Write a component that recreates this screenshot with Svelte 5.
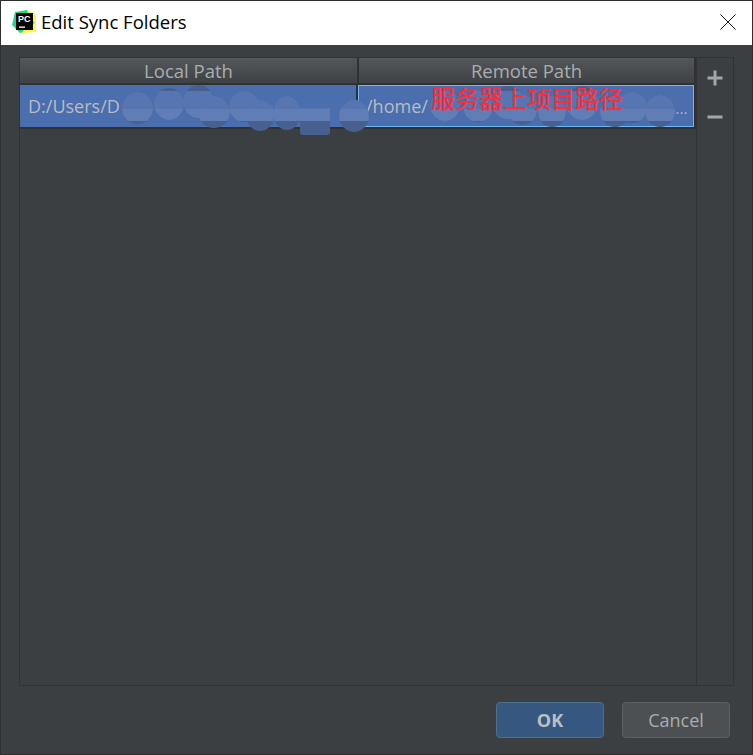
<script>
    // redaction blobs, in page coordinates
    let blobs = [
        { x: 122, y: 92, w: 31, h: 32 },
        { x: 154, y: 88, w: 30, h: 32 },
        { x: 183, y: 85, w: 31, h: 33 },
        { x: 198, y: 96, w: 32, h: 32 },
        { x: 229, y: 91, w: 31, h: 31 },
        { x: 246, y: 100, w: 28, h: 31 },
        { x: 255, y: 105, w: 18, h: 20, r: "0" },
        { x: 273, y: 96, w: 28, h: 34 },
        { x: 300, y: 108, w: 30, h: 27, r: "0 0 3px 3px" },
        { x: 339, y: 100, w: 30, h: 32 },
        { x: 430, y: 90, w: 30, h: 31 },
        { x: 463, y: 91, w: 30, h: 31 },
        { x: 492, y: 86, w: 32, h: 33 },
        { x: 508, y: 95, w: 29, h: 30 },
        { x: 538, y: 96, w: 28, h: 31 },
        { x: 566, y: 86, w: 32, h: 34 },
        { x: 600, y: 96, w: 30, h: 31 },
        { x: 618, y: 92, w: 29, h: 31 },
        { x: 645, y: 95, w: 30, h: 32 },
    ];

    // the blobs only show light between these lines
    let bands = [
        { y: 91, h: 18, c: "#5675b1" },
        { y: 109, h: 12, c: "#607db5" },
    ];
</script>

<div class="window">
    <header class="titlebar">
        <svg class="logo" width="24" height="24" viewBox="0 0 24 24">
            <path d="M3 2 L15 0 L23 6 L23 21 L8 23 L0 15 Z" fill="#21d789" />
            <path d="M15 0 L24 4 L24 14 L17 7 Z" fill="#fcf84a" />
            <path d="M9 23 L24 22 L24 12 L16 17 Z" fill="#fcf84a" />
            <rect x="4" y="3" width="17" height="17" fill="#000" />
            <text x="6" y="11.5" class="logo-text">PC</text>
            <rect x="7" y="16.5" width="6" height="1.3" fill="#fff" />
        </svg>
        <span class="title">Edit Sync Folders</span>
        <svg class="close" width="16" height="16" viewBox="0 0 16 16">
            <path d="M0.5 0.5 L15.5 15.5 M15.5 0.5 L0.5 15.5" stroke="#111" stroke-width="1" fill="none" />
        </svg>
    </header>

    <main class="content">
        <section class="table">
            <div class="head">
                <div class="th left">Local Path</div>
                <div class="th">Remote Path</div>
            </div>
            <div class="row">
                <div class="cell left">D:/Users/D</div>
                <div class="cell focused">
                    <span>/home/</span><span class="dots">...</span>
                </div>
                {#each blobs as b}
                    <i
                        class="blob"
                        style="left:{b.x - 20}px;top:{b.y - 85}px;width:{b.w}px;height:{b.h}px;background:#47608f;border-radius:{b.r ?? '50%'}"
                    ></i>
                {/each}
                {#each bands as band}
                    <div class="band" style="top:{band.y - 85}px;height:{band.h}px">
                        {#each blobs as b}
                            <i
                                class="blob"
                                style="left:{b.x - 20}px;top:{b.y - band.y}px;width:{b.w}px;height:{b.h}px;background:{band.c};border-radius:{b.r ?? '50%'}"
                            ></i>
                        {/each}
                    </div>
                {/each}
                <span class="note">服务器上项目路径</span>
            </div>
        </section>
        <aside class="tools">
            <svg width="16" height="16" viewBox="0 0 16 16">
                <path d="M8 0.5 V15.5 M0.5 8 H15.5" stroke="#a4a6a8" stroke-width="3" fill="none" />
            </svg>
            <svg width="16" height="16" viewBox="0 0 16 16">
                <path d="M0.5 8 H15.5" stroke="#a4a6a8" stroke-width="3" fill="none" />
            </svg>
        </aside>
    </main>

    <footer class="footer">
        <button class="btn ok">OK</button>
        <button class="btn">Cancel</button>
    </footer>
</div>

<style>
    :global(body) {
        margin: 0;
        background: #3c3f41;
    }

    .window {
        width: 753px;
        height: 755px;
        box-sizing: border-box;
        border: 1px solid #2f2f2f;
        display: flex;
        flex-direction: column;
        background: #3c3f41;
        font-family: "Open Sans", "Noto Sans CJK SC", sans-serif;
    }

    .titlebar {
        height: 44px;
        flex: none;
        box-sizing: border-box;
        background: #fff;
        display: flex;
        align-items: center;
        padding: 0 16px 3px 11px;
        color: #000;
    }

    .logo {
        flex: none;
    }

    .logo-text {
        font: bold 9px "Liberation Sans", sans-serif;
        fill: #fff;
    }

    .title {
        margin-left: 5px;
        font-size: 18.5px;
        flex: 1;
    }

    .close {
        flex: none;
    }

    .content {
        height: 629px;
        flex: none;
        box-sizing: border-box;
        margin: 12px 18px 0 18px;
        border: 1px solid #323232;
        display: flex;
    }

    .table {
        width: 676px;
        flex: none;
    }

    .head {
        display: flex;
        height: 25px;
        background: linear-gradient(#53565a, #3f4245);
        border-bottom: 2px solid #2f3133;
        border-right: 2px solid #2f3133;
    }

    .th {
        flex: 1;
        text-align: center;
        color: #a9adb0;
        font-size: 18.5px;
        line-height: 26px;
    }

    .th.left {
        flex: none;
        width: 337px;
        border-right: 2px solid #2f3133;
    }

    .row {
        position: relative;
        display: flex;
        height: 42px;
        background: #4b6eaf;
        border-bottom: 2px solid #2f3133;
        border-right: 2px solid #2f3133;
        color: #b8bcc2;
        font-size: 18px;
    }

    .cell {
        line-height: 42px;
        box-sizing: border-box;
    }

    .cell.left {
        width: 338px;
        flex: none;
        padding-left: 8px;
        border-right: 2px solid #2f3133;
    }

    .focused {
        flex: 1;
        display: flex;
        justify-content: space-between;
        padding: 0 5px 0 7px;
        border: 1px solid #6fb5ef;
        line-height: 40px;
    }

    .dots {
        font-size: 14px;
        letter-spacing: 0.5px;
        position: relative;
        top: 3px;
        z-index: 2;
    }

    .blob {
        position: absolute;
    }

    .band {
        position: absolute;
        left: 0;
        right: 0;
        overflow: hidden;
    }

    .note {
        position: absolute;
        left: 411px;
        top: -1px;
        color: #f9303c;
        font-size: 24px;
        font-weight: 500;
        line-height: 30px;
        white-space: nowrap;
    }

    .tools {
        flex: 1;
        border-left: 1px solid #323232;
        display: flex;
        flex-direction: column;
        align-items: center;
        gap: 23px;
        padding-top: 12px;
    }

    .footer {
        flex: 1;
        display: flex;
        justify-content: flex-end;
        gap: 18px;
        padding: 16px 22px 0 0;
    }

    .btn {
        width: 108px;
        height: 36px;
        box-sizing: border-box;
        border-radius: 4px;
        border: 1px solid #5e6163;
        background: #4c5052;
        color: #a9adb0;
        font: 18px "Open Sans", sans-serif;
        padding: 0;
    }

    .ok {
        background: #365880;
        border-color: #4c708c;
        color: #bbbfc4;
        font-weight: 700;
    }
</style>
